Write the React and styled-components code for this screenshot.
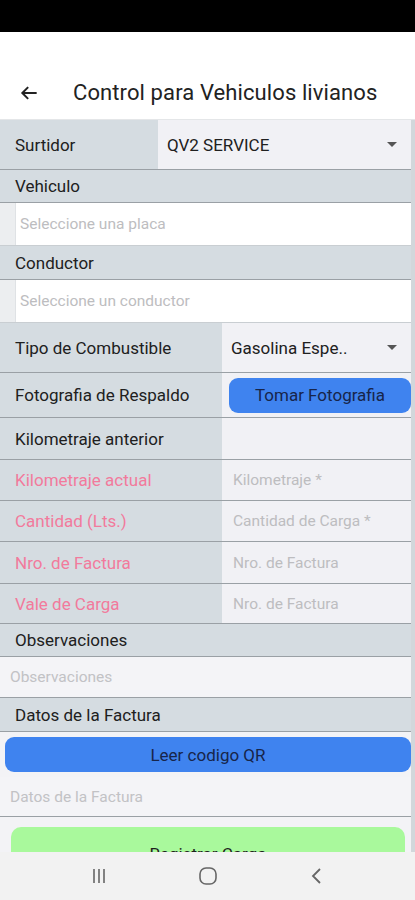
import React from "react";
import styled, { createGlobalStyle } from "styled-components";

const Global = createGlobalStyle`
  html, body { margin: 0; padding: 0; background: #ffffff; }
  body { font-family: Roboto, "Noto Sans", "Liberation Sans", sans-serif; }
  * { box-sizing: border-box; }
`;

const Screen = styled.div`
  width: 415px;
  height: 900px;
  display: flex;
  flex-direction: column;
  overflow: hidden;
  background: #ffffff;
`;

const StatusBar = styled.div`
  height: 32px;
  background: #000;
  flex: none;
`;

const Header = styled.div`
  height: 88px;
  flex: none;
  display: flex;
  align-items: center;
  padding: 34px 0 0 19px;
  background: #fff;
  border-bottom: 1px solid #e4e6e8;
`;

const Title = styled.div`
  margin-left: 34px;
  font-size: 22px;
  color: #222;
  letter-spacing: 0.1px;
`;

const Scroll = styled.div`
  flex: 1;
  overflow: hidden;
  display: flex;
  flex-direction: column;
  border-right: 4px solid #d2d7db;
  background: #f3f3f6;
`;

const Row = styled.div`
  display: flex;
  height: ${(p) => p.h}px;
  border-bottom: 1px solid #9aa0a5;
  flex: none;
`;

const Label = styled.div`
  width: ${(p) => p.w}px;
  flex: none;
  background: #d5dce1;
  display: flex;
  align-items: center;
  padding-left: 15px;
  font-size: 17px;
  color: ${(p) => (p.pink ? "#f27a9c" : "#202020")};
`;

const Cell = styled.div`
  flex: 1;
  background: #f1f1f5;
  display: flex;
  align-items: center;
  padding: 0 0 0 ${(p) => p.pl || 9}px;
  font-size: ${(p) => (p.ph ? 15.5 : 17)}px;
  color: ${(p) => (p.ph ? "#bdbdc0" : "#202020")};
  justify-content: space-between;
`;

const SectionHead = styled.div`
  height: ${(p) => p.h}px;
  flex: none;
  background: #d5dce1;
  display: flex;
  align-items: center;
  padding-left: 15px;
  font-size: 17px;
  color: #202020;
  border-bottom: 1px solid #9aa0a5;
`;

const PickRow = styled.div`
  height: ${(p) => p.h}px;
  flex: none;
  display: flex;
  background: #eceef0;
  border-bottom: 1px solid #c9ced2;
`;

const PickBox = styled.div`
  margin-left: 15px;
  flex: 1;
  background: #ffffff;
  border-left: 1px solid #dfe2e5;
  display: flex;
  align-items: center;
  padding-left: 4px;
  font-size: 15.5px;
  color: #bdbdc0;
`;

const TextArea = styled.div`
  height: ${(p) => p.h}px;
  flex: none;
  display: flex;
  align-items: center;
  padding-left: 10px;
  font-size: 15.5px;
  color: #c2c2c5;
  background: #f4f4f7;
  border-bottom: 1px solid #9aa0a5;
`;

const BtnRow = styled.div`
  flex: none;
  padding: ${(p) => p.pad};
  background: #f3f3f6;
`;

const Button = styled.div`
  height: ${(p) => p.h}px;
  flex: 1;
  border-radius: ${(p) => p.r}px;
  background: ${(p) => p.bg};
  color: ${(p) => p.fg};
  display: flex;
  align-items: center;
  justify-content: center;
  font-size: 17px;
`;

const SubmitButton = styled(Button)`
  align-items: flex-start;
  padding-top: 17px;
`;

const SmallBtnCell = styled.div`
  flex: 1;
  background: #f1f1f5;
  display: flex;
  align-items: center;
  padding: 0 0 0 7px;
`;

const Caret = styled.span`
  width: 0;
  height: 0;
  border-left: 5px solid transparent;
  border-right: 5px solid transparent;
  border-top: 5px solid #555;
  margin-right: 14px;
`;

const NavBar = styled.div`
  height: 48px;
  flex: none;
  background: #f2f2f2;
  display: flex;
  align-items: center;
  justify-content: center;
  gap: 69px;
`;

const NavIcon = styled.div`
  width: 40px;
  display: flex;
  justify-content: center;
`;

const BackArrow = () => (
  <svg width="20" height="20" viewBox="0 0 24 24" fill="none" stroke="#222" strokeWidth="2.4" strokeLinecap="square">
    <path d="M20 12H5" />
    <path d="M11 5l-7 7 7 7" strokeLinecap="butt" />
  </svg>
);

export default function App() {
  return (
    <Screen>
      <Global />
      <StatusBar />
      <Header>
        <BackArrow />
        <Title>Control para Vehiculos livianos</Title>
      </Header>
      <Scroll>
        <Row h={50}>
          <Label w={158}>Surtidor</Label>
          <Cell>
            QV2 SERVICE
            <Caret />
          </Cell>
        </Row>
        <SectionHead h={33}>Vehiculo</SectionHead>
        <PickRow h={43}>
          <PickBox>Seleccione una placa</PickBox>
        </PickRow>
        <SectionHead h={34}>Conductor</SectionHead>
        <PickRow h={43}>
          <PickBox>Seleccione un conductor</PickBox>
        </PickRow>
        <Row h={50}>
          <Label w={222}>Tipo de Combustible</Label>
          <Cell>
            Gasolina Espe..
            <Caret />
          </Cell>
        </Row>
        <Row h={45}>
          <Label w={222}>Fotografia de Respaldo</Label>
          <SmallBtnCell>
            <Button h={35} r={9} bg="#3f83ef" fg="#17254a">
              Tomar Fotografia
            </Button>
          </SmallBtnCell>
        </Row>
        <Row h={42}>
          <Label w={222}>Kilometraje anterior</Label>
          <Cell />
        </Row>
        <Row h={41}>
          <Label w={222} pink>Kilometraje actual</Label>
          <Cell ph pl={11}>Kilometraje *</Cell>
        </Row>
        <Row h={41}>
          <Label w={222} pink>Cantidad (Lts.)</Label>
          <Cell ph pl={11}>Cantidad de Carga *</Cell>
        </Row>
        <Row h={42}>
          <Label w={222} pink>Nro. de Factura</Label>
          <Cell ph pl={11}>Nro. de Factura</Cell>
        </Row>
        <Row h={40}>
          <Label w={222} pink>Vale de Carga</Label>
          <Cell ph pl={11}>Nro. de Factura</Cell>
        </Row>
        <SectionHead h={33}>Observaciones</SectionHead>
        <TextArea h={41}>Observaciones</TextArea>
        <SectionHead h={34}>Datos de la Factura</SectionHead>
        <BtnRow pad="5px 0 5px 5px">
          <Button h={35} r={9} bg="#3f83ef" fg="#17254a">
            Leer codigo QR
          </Button>
        </BtnRow>
        <TextArea h={40}>Datos de la Factura</TextArea>
        <BtnRow pad="10px 6px 0 11px">
          <SubmitButton h={60} r={10} bg="#a9f99c" fg="#1e1e1e">
            Registrar Carga
          </SubmitButton>
        </BtnRow>
      </Scroll>
      <NavBar>
        <NavIcon>
          <svg width="16" height="18" viewBox="0 0 16 18" fill="none" stroke="#666" strokeWidth="1.6">
            <path d="M3 2v14M8 2v14M13 2v14" />
          </svg>
        </NavIcon>
        <NavIcon>
          <svg width="20" height="20" viewBox="0 0 20 20" fill="none" stroke="#666" strokeWidth="1.6">
            <rect x="2" y="2" width="16" height="16" rx="6" />
          </svg>
        </NavIcon>
        <NavIcon>
          <svg width="14" height="20" viewBox="0 0 14 20" fill="none" stroke="#666" strokeWidth="1.8">
            <path d="M10 3L3 10l7 7" />
          </svg>
        </NavIcon>
      </NavBar>
    </Screen>
  );
}
